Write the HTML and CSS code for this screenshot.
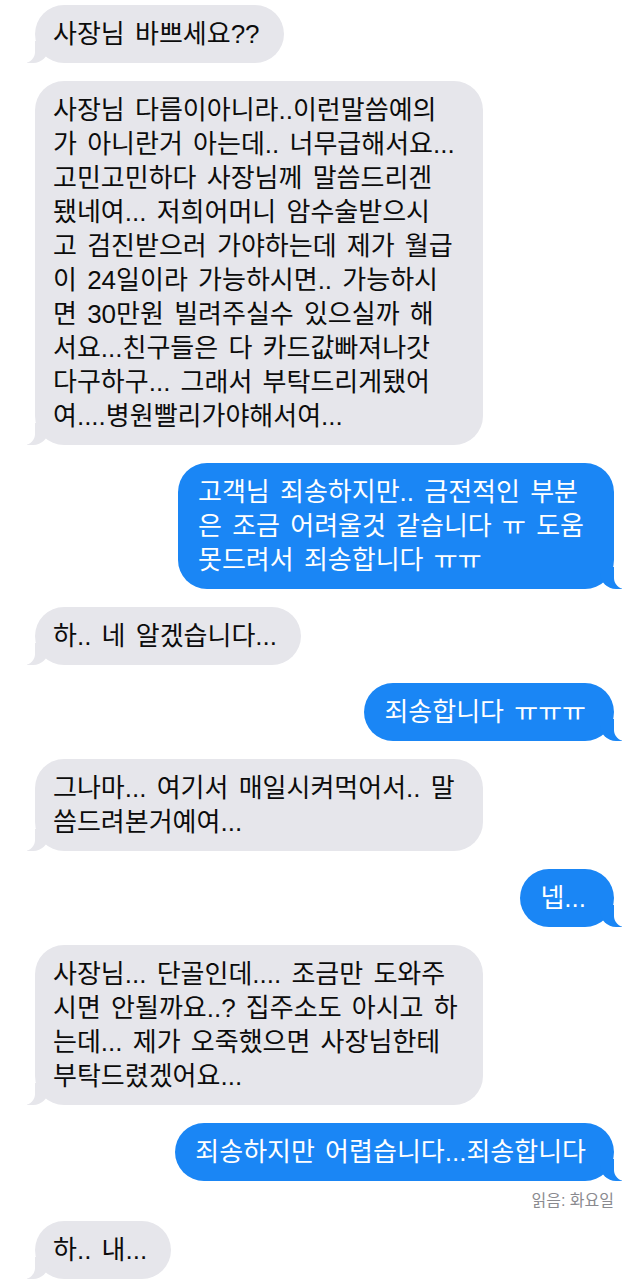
FILE: index.html
```html
<!DOCTYPE html>
<html lang="ko">
<head>
  <meta charset="UTF-8" />
  <title>메시지</title>
  <meta name="viewport" content="width=device-width, initial-scale=1" />
  <link rel="stylesheet" href="styles.css">
</head>
<body>
  <div class="thread">
    <div class="msg them">사장님 바쁘세요??</div>

    <div class="msg them wide">
      사장님 다름이아니라..이런말씀예의<br>
      가 아니란거 아는데.. 너무급해서요...<br>
      고민고민하다 사장님께 말씀드리겐<br>
      됐네여... 저희어머니 암수술받으시<br>
      고 검진받으러 가야하는데 제가 월급<br>
      이 24일이라 가능하시면.. 가능하시<br>
      면 30만원 빌려주실수 있으실까 해<br>
      서요...친구들은 다 카드값빠져나갓<br>
      다구하구... 그래서 부탁드리게됐어<br>
      여....병원빨리가야해서여...
    </div>

    <div class="msg me wide">
      고객님 죄송하지만.. 금전적인 부분<br>
      은 조금 어려울것 같습니다 ㅠ 도움<br>
      못드려서 죄송합니다 ㅠㅠ
    </div>

    <div class="msg them">하.. 네 알겠습니다...</div>

    <div class="msg me">죄송합니다 ㅠㅠㅠ</div>

    <div class="msg them wide">
      그나마... 여기서 매일시켜먹어서.. 말<br>
      씀드려본거예여...
    </div>

    <div class="msg me">넵...</div>

    <div class="msg them wide">
      사장님... 단골인데.... 조금만 도와주<br>
      시면 안될까요..? 집주소도 아시고 하<br>
      는데... 제가 오죽했으면 사장님한테<br>
      부탁드렸겠어요...
    </div>

    <div class="msg me">죄송하지만 어렵습니다...죄송합니다</div>
    <div class="read">읽음: 화요일</div>

    <div class="msg them">하.. 내...</div>
  </div>
</body>
</html>
```

FILE: styles.css
```css
body {
  margin: 0;
  background: #fff;
  font-family: "Liberation Sans", "Noto Sans CJK KR", sans-serif;
}

.thread {
  display: flex;
  flex-direction: column;
  gap: 18px;
  padding: 5px 26px 0 35px;
}

.msg {
  position: relative;
  box-sizing: border-box;
  max-width: 456px;
  border-radius: 29px;
  font-size: 26px;
  line-height: 34px;
  word-spacing: 3px;
  white-space: nowrap;
}

.them {
  align-self: flex-start;
  padding: 12px 24px 12px 18px;
  background: #e6e6eb;
  color: #0c0c0c;
}

.me {
  align-self: flex-end;
  padding: 12px 28px 12px 20px;
  background: #1a86f5;
  color: #fff;
}

.them.wide {
  width: 448px;
}

.me.wide {
  width: 436px;
}

/* bubble tails */
.msg::before,
.msg::after {
  content: "";
  position: absolute;
  bottom: 0;
  height: 22px;
}

.them::before {
  left: -8px;
  width: 22px;
  background: #e6e6eb;
  border-bottom-right-radius: 16px;
}

.them::after {
  left: -12px;
  width: 12px;
  background: #fff;
  border-bottom-right-radius: 11px;
}

.me::before {
  right: -8px;
  width: 22px;
  background: #1a86f5;
  border-bottom-left-radius: 16px;
}

.me::after {
  right: -12px;
  width: 12px;
  background: #fff;
  border-bottom-left-radius: 11px;
}

.read {
  align-self: flex-end;
  margin: -8px 0 -8px;
  font-size: 16px;
  line-height: 20px;
  color: #8a8a8f;
}
```
